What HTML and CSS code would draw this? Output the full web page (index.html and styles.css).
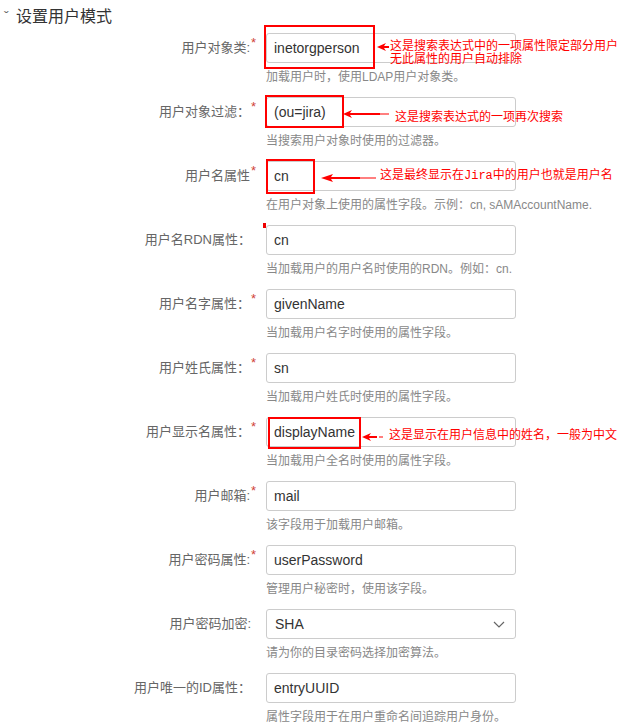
FILE: index.html
```html
<!DOCTYPE html>
<html lang="zh-CN">
<head>
  <meta charset="UTF-8" />
  <meta name="viewport" content="width=device-width, initial-scale=1.0">
  <title>设置用户模式</title>
  <link rel="stylesheet" href="styles.css">
</head>
<body>
  <h3 class="section-title"><span class="caret">&#711;</span>设置用户模式</h3>
  <form class="schema">
    <div class="field">
      <label class="label" for="userObjectClass">用户对象类:<span class="req">*</span></label>
      <input type="text" id="userObjectClass" value="inetorgperson" />
      <div class="hint">加载用户时，使用LDAP用户对象类。</div>
      <span class="mark mark-1"></span>
      <svg class="arrow arrow-1" width="12" height="8" viewBox="0 0 12 8"><path d="M0 4 L9 0 L7 3 L12 3 L12 5 L7 5 L9 8 Z" fill="#f00"/></svg>
      <div class="note note-1">这是搜索表达式中的一项属性限定部分用户<br>无此属性的用户自动排除</div>
    </div>

    <div class="field">
      <label class="label" for="userObjectFilter">用户对象过滤：<span class="req">*</span></label>
      <input type="text" id="userObjectFilter" value="(ou=jira)" />
      <div class="hint">当搜索用户对象时使用的过滤器。</div>
      <span class="mark mark-2"></span>
      <svg class="arrow arrow-2" width="46" height="8" viewBox="0 0 46 8"><path d="M0 4 L9 0 L7 3 L37 3 L37 5 L7 5 L9 8 Z" fill="#f00"/><rect x="37" y="3.5" width="9" height="1" fill="#f00"/></svg>
      <div class="note note-2">这是搜索表达式的一项再次搜索</div>
    </div>

    <div class="field">
      <label class="label" for="userNameAttr">用户名属性<span class="req">*</span></label>
      <input type="text" id="userNameAttr" value="cn" />
      <div class="hint">在用户对象上使用的属性字段。示例：cn, sAMAccountName.</div>
      <span class="mark mark-3"></span>
      <svg class="arrow arrow-3" width="55" height="8" viewBox="0 0 55 8"><path d="M0 4 L12 0 L10 3 L39 3 L39 5 L10 5 L12 8 Z" fill="#f00"/><rect x="39" y="3.5" width="16" height="1" fill="#f00"/></svg>
      <div class="note note-3">这是最终显示在<span class="mono">Jira</span>中的用户也就是用户名</div>
    </div>

    <div class="field">
      <label class="label" for="userNameRdn">用户名RDN属性：</label>
      <input type="text" id="userNameRdn" value="cn" />
      <div class="hint">当加载用户的用户名时使用的RDN。例如：cn.</div>
      <span class="tick"></span>
    </div>

    <div class="field">
      <label class="label" for="firstName">用户名字属性：<span class="req">*</span></label>
      <input type="text" id="firstName" value="givenName" />
      <div class="hint">当加载用户名字时使用的属性字段。</div>
    </div>

    <div class="field">
      <label class="label" for="lastName">用户姓氏属性：<span class="req">*</span></label>
      <input type="text" id="lastName" value="sn" />
      <div class="hint">当加载用户姓氏时使用的属性字段。</div>
    </div>

    <div class="field">
      <label class="label" for="displayName">用户显示名属性：<span class="req">*</span></label>
      <input type="text" id="displayName" value="displayName" />
      <div class="hint">当加载用户全名时使用的属性字段。</div>
      <span class="mark mark-4"></span>
      <svg class="arrow arrow-4" width="22" height="8" viewBox="0 0 22 8"><path d="M0 4 L9 0 L7 3 L15 3 L15 5 L7 5 L9 8 Z" fill="#f00"/><rect x="17" y="3.5" width="4" height="1" fill="#f00"/></svg>
      <div class="note note-4">这是显示在用户信息中的姓名，一般为中文</div>
    </div>

    <div class="field">
      <label class="label" for="email">用户邮箱:<span class="req">*</span></label>
      <input type="text" id="email" value="mail" />
      <div class="hint">该字段用于加载用户邮箱。</div>
    </div>

    <div class="field">
      <label class="label" for="password">用户密码属性:<span class="req">*</span></label>
      <input type="text" id="password" value="userPassword" />
      <div class="hint">管理用户秘密时，使用该字段。</div>
    </div>

    <div class="field">
      <label class="label" for="encryption">用户密码加密:</label>
      <div class="select-wrap">
        <select id="encryption">
          <option>SHA</option>
          <option>MD5</option>
          <option>PLAINTEXT</option>
        </select>
        <svg class="chevron" width="12" height="7" viewBox="0 0 12 7"><path d="M1 1 L6 6 L11 1" fill="none" stroke="#666" stroke-width="1.2"/></svg>
      </div>
      <div class="hint">请为你的目录密码选择加密算法。</div>
    </div>

    <div class="field">
      <label class="label" for="uuid">用户唯一的ID属性：</label>
      <input type="text" id="uuid" value="entryUUID" />
      <div class="hint">属性字段用于在用户重命名间追踪用户身份。</div>
    </div>
  </form>
</body>
</html>
```

FILE: styles.css
```css
body {
  margin: 0;
  background-color: #fff;
  font-family: "Liberation Sans", "Noto Sans CJK SC", sans-serif;
  color: #333;
}
.section-title {
  margin: 0;
  padding: 6px 0 0 4px;
  font-size: 16px;
  font-weight: normal;
  line-height: 22px;
  color: #333;
}
.caret {
  display: inline-block;
  width: 12px;
  font-size: 14px;
  color: #666;
}
.schema {
  margin-top: 5px;
}
.field {
  position: relative;
  display: grid;
  grid-template-columns: 257px 250px;
  column-gap: 9px;
  margin-bottom: 11px;
}
.label {
  display: flex;
  justify-content: flex-end;
  padding-right: 6px;
  font-size: 13px;
  line-height: 30px;
  color: #666;
  white-space: nowrap;
}
.req {
  width: 6px;
  margin-right: -6px;
  padding-left: 1px;
  color: #d04437;
  font-size: 13px;
  line-height: 20px;
}
input[type="text"],
select {
  box-sizing: border-box;
  width: 250px;
  height: 30px;
  margin: 0;
  padding: 0 7px;
  border: 1px solid #ccc;
  border-radius: 3px;
  background-color: #fff;
  font-family: inherit;
  font-size: 14px;
  color: #333;
}
select {
  appearance: none;
  -webkit-appearance: none;
  padding-left: 8px;
}
.select-wrap {
  position: relative;
  width: 250px;
}
.chevron {
  position: absolute;
  right: 11px;
  top: 12px;
  pointer-events: none;
}
.hint {
  grid-column: 2;
  margin-top: 5px;
  font-size: 12px;
  line-height: 18px;
  color: #888;
  white-space: nowrap;
}

/* red call-outs drawn over the form */
.mark {
  position: absolute;
  border: 2px solid #f00;
  box-sizing: border-box;
}
.mark-1 { left: 264px; top: -8px; width: 111px; height: 44px; }
.mark-2 { left: 265px; top: -2px; width: 79px; height: 33px; }
.mark-3 { left: 266px; top: -2px; width: 49px; height: 35px; }
.mark-4 { left: 268px; top: 0; width: 93px; height: 32px; }
.tick {
  position: absolute;
  left: 263px;
  top: -2px;
  width: 3px;
  height: 5px;
  background-color: #e00;
}
.arrow {
  position: absolute;
}
.arrow-1 { left: 377px; top: 10px; }
.arrow-2 { left: 343px; top: 13px; }
.arrow-3 { left: 321px; top: 13px; }
.arrow-4 { left: 362px; top: 16px; }
.note {
  position: absolute;
  font-size: 12px;
  line-height: 13px;
  color: #f00;
  white-space: nowrap;
}
.note-1 { left: 390px; top: 7px; }
.note-2 { left: 395px; top: 14px; }
.note-3 { left: 380px; top: 8px; }
.note-4 { left: 389px; top: 12px; }
.mono {
  font-family: "Liberation Mono", monospace;
  font-size: 12px;
}
```
